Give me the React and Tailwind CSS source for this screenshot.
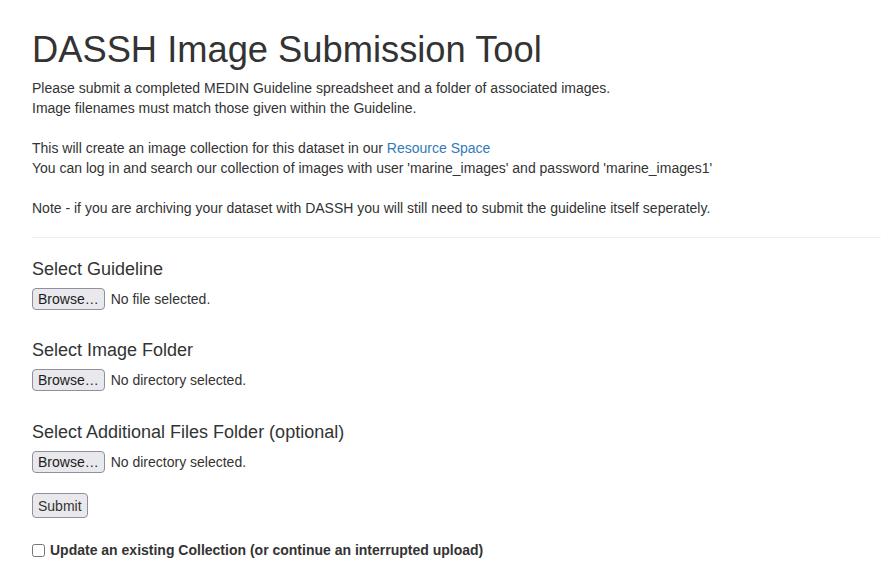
import { useState } from "react";

function FilePicker({ label, empty, className = "" }) {
  return (
    <div className={className}>
      <h4 className="text-[18px] leading-[20px] font-normal">{label}</h4>
      <div className="mt-[9px] flex items-center gap-[6px]">
        <button className="h-[22px] px-[5px] rounded-[4px] border border-[#8f8f9d] bg-[#e9e9ed] text-[14px] text-[#1c1b22] leading-none">
          Browse…
        </button>
        <span className="text-[14px]">{empty}</span>
      </div>
    </div>
  );
}

export default function App() {
  const [update, setUpdate] = useState(false);

  return (
    <div
      className="min-h-[582px] bg-white text-[#333] pl-8 overflow-hidden"
      style={{ fontFamily: '"Liberation Sans", Arial, sans-serif' }}
    >
      <h1 className="pt-[30px] text-[36.3px] leading-[40px] font-normal">
        DASSH Image Submission Tool
      </h1>

      {/* Intro */}
      <p className="mt-[8px] text-[14px] leading-[20px]">
        Please submit a completed MEDIN Guideline spreadsheet and a folder of associated images.
        <br />
        Image filenames must match those given within the Guideline.
        <br />
        <br />
        This will create an image collection for this dataset in our{" "}
        <a href="#" className="text-[#337ab7]">
          Resource Space
        </a>
        <br />
        You can log in and search our collection of images with user 'marine_images' and password 'marine_images1'
        <br />
        <br />
        Note - if you are archiving your dataset with DASSH you will still need to submit the guideline itself seperately.
      </p>

      <hr className="mt-[19px] border-0 border-t border-[#eee]" />

      {/* Form */}
      <div className="mt-[21px] flex flex-col">
        <FilePicker label="Select Guideline" empty="No file selected." />
        <FilePicker className="mt-[30px]" label="Select Image Folder" empty="No directory selected." />
        <FilePicker className="mt-[31px]" label="Select Additional Files Folder (optional)" empty="No directory selected." />
      </div>

      <button className="mt-[20px] h-[25px] px-[5px] rounded-[4px] border border-[#8f8f9d] bg-[#e9e9ed] text-[14px] leading-none">
        Submit
      </button>

      <label className="mt-[22px] flex items-center gap-[5px] text-[14px] font-bold">
        <input
          type="checkbox"
          checked={update}
          onChange={(e) => setUpdate(e.target.checked)}
          className="w-[13px] h-[13px] m-0"
        />
        Update an existing Collection (or continue an interrupted upload)
      </label>
    </div>
  );
}
